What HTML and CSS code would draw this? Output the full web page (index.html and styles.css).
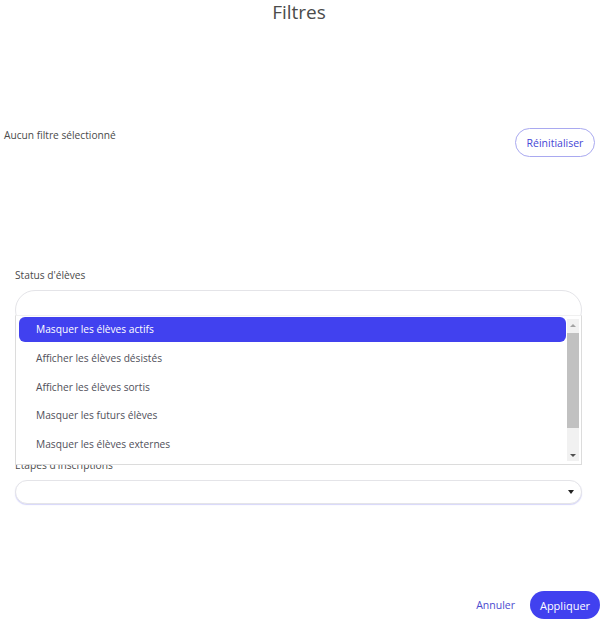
FILE: index.html
```html
<!DOCTYPE html>
<html lang="fr">
<head>
    <meta charset="UTF-8">
    <meta name="viewport" content="width=device-width, initial-scale=1.0">
    <title>Filtres</title>
    <link rel="stylesheet" href="styles.css">
</head>
<body>
    <div class="modal">
        <h1 class="modal-title">Filtres</h1>

        <div class="summary">
            <p class="summary-text">Aucun filtre sélectionné</p>
            <button type="button" class="btn-outline">Réinitialiser</button>
        </div>

        <div class="fields">
            <div class="field field-status">
                <label class="field-label">Status d'élèves</label>
                <div class="select select-multi"></div>

                <!-- open listbox -->
                <div class="dropdown">
                    <ul class="options">
                        <li class="option active">Masquer les élèves actifs</li>
                        <li class="option">Afficher les élèves désistés</li>
                        <li class="option">Afficher les élèves sortis</li>
                        <li class="option">Masquer les futurs élèves</li>
                        <li class="option">Masquer les élèves externes</li>
                    </ul>
                    <div class="scrollbar">
                        <span class="scroll-arrow up"></span>
                        <span class="scroll-track"><span class="scroll-thumb"></span></span>
                        <span class="scroll-arrow down"></span>
                    </div>
                </div>
            </div>

            <div class="field">
                <label class="field-label">Etapes d'inscriptions</label>
                <div class="select">
                    <span class="caret"></span>
                </div>
            </div>
        </div>

        <div class="footer">
            <button type="button" class="btn-link">Annuler</button>
            <button type="button" class="btn-primary">Appliquer</button>
        </div>
    </div>
</body>
</html>
```

FILE: styles.css
```css
:root {
    --primary: #4141ef;
    --primary-soft: #a9a9f0;
    --text: #4a4a4a;
    --option-text: #50505a;
    --border: #e4e4e8;
}

* {
    margin: 0;
    padding: 0;
    box-sizing: border-box;
}

body {
    font-family: 'Open Sans', sans-serif;
    color: var(--text);
    background: #ffffff;
}

.modal {
    min-height: 622px;
    display: flex;
    flex-direction: column;
}

.modal-title {
    font-size: 19px;
    font-weight: 400;
    line-height: 24px;
    text-align: center;
    color: #4b4b4b;
    margin-left: -4px;
}

.summary {
    display: flex;
    justify-content: space-between;
    align-items: flex-start;
    margin-top: 104px;
    padding: 0 7px 0 4px;
}

.summary-text {
    font-size: 10.2px;
    line-height: 15px;
    margin-top: 0;
}

.btn-outline {
    width: 80px;
    height: 29px;
    border: 1px solid var(--primary-soft);
    border-radius: 15px;
    background: #fff;
    color: #4646d6;
    font-family: 'Open Sans', sans-serif;
    font-size: 10.5px;
}

.fields {
    margin-top: 111px;
    padding: 0 20px 0 15px;
}

.field {
    display: flex;
    flex-direction: column;
}

.field-status {
    position: relative;
    margin-bottom: 128px;
}

.field-label {
    font-size: 10.2px;
    line-height: 15px;
    margin-bottom: 7px;
    color: #4a4a4a;
}

.select {
    position: relative;
    height: 24px;
    border: 1px solid var(--border);
    border-radius: 12px;
    box-shadow: 0 1px 1px rgba(90, 90, 230, 0.25);
    background: #fff;
}

.select-multi {
    height: 40px;
    border-radius: 20px;
    box-shadow: none;
}

.caret {
    position: absolute;
    right: 7px;
    top: 9px;
    border-left: 3.5px solid transparent;
    border-right: 3.5px solid transparent;
    border-top: 4px solid #222;
}

/* open listbox over the rest of the form */
.dropdown {
    position: absolute;
    top: 47px;
    left: 0;
    right: 0;
    height: 150px;
    display: flex;
    padding: 1px 2px 3px 3px;
    background: #fff;
    border: 1px solid #dcdcdc;
    border-top-color: #f0f0f0;
}

.options {
    list-style: none;
    flex: 1;
    display: flex;
    flex-direction: column;
    gap: 3.75px;
}

.option {
    height: 25px;
    line-height: 24px;
    padding-left: 17px;
    font-size: 10.2px;
    color: var(--option-text);
    border-radius: 6px;
}

.option.active {
    background: var(--primary);
    color: #fff;
    font-weight: 500;
}

.scrollbar {
    width: 12px;
    margin-left: 1px;
    margin-top: 2px;
    display: flex;
    flex-direction: column;
    background: #f1f1f1;
}

.scroll-arrow {
    height: 12px;
    display: flex;
    justify-content: center;
    align-items: center;
}

.scroll-arrow::after {
    content: '';
    border-left: 3px solid transparent;
    border-right: 3px solid transparent;
}

.scroll-arrow.up::after {
    border-bottom: 3px solid #a3a3a3;
}

.scroll-arrow.down::after {
    border-top: 3px solid #505050;
}

.scroll-track {
    flex: 1;
    padding: 2px 0 21px;
    display: flex;
}

.scroll-thumb {
    flex: 1;
    background: #c1c1c1;
}

.footer {
    margin-top: auto;
    display: flex;
    justify-content: flex-end;
    align-items: center;
    gap: 15px;
    padding: 0 2px 3px 0;
}

.btn-link {
    border: none;
    background: none;
    color: #4b4bcf;
    font-family: 'Open Sans', sans-serif;
    font-size: 10.5px;
}

.btn-primary {
    width: 70px;
    height: 28px;
    border: none;
    border-radius: 14px;
    background: var(--primary);
    color: #fff;
    font-family: 'Open Sans', sans-serif;
    font-size: 11px;
}
```
